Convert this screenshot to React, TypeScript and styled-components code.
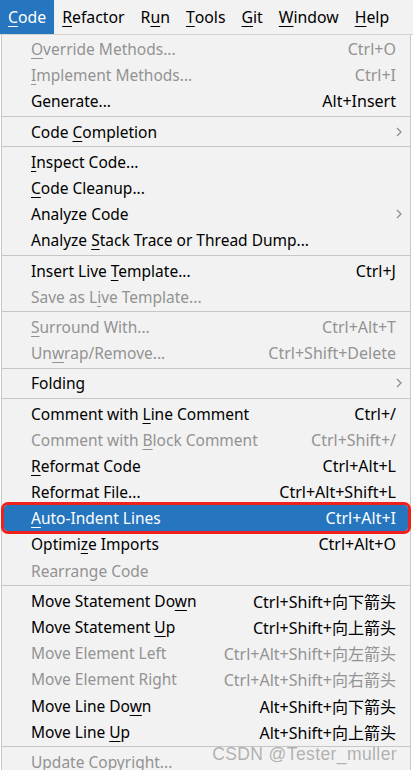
import React from "react";
import styled, { createGlobalStyle } from "styled-components";

const GlobalStyle = createGlobalStyle`
  body {
    margin: 0;
    background: #ffffff;
    font-family: "Noto Sans", "Noto Sans CJK SC", sans-serif;
  }
`;

const Page = styled.div`
  position: relative;
  width: 413px;
  height: 770px;
  overflow: hidden;
  background: #ffffff;
`;

const MenuBar = styled.div`
  display: flex;
  align-items: stretch;
  height: 35px;
  background: #f2f2f2;
  border-bottom: 1px solid #d4d4d4;
  box-sizing: border-box;
`;

const MenuTitle = styled.div<{ $active?: boolean }>`
  display: flex;
  align-items: center;
  padding: 0 8px;
  font-size: 15.8px;
  color: ${(p) => (p.$active ? "#ffffff" : "#000000")};
  background: ${(p) => (p.$active ? "#2675bf" : "transparent")};
`;

const Mn = styled.span`
  text-decoration: underline;
  text-underline-offset: 3px;
  text-decoration-thickness: 1px;
`;

const Dropdown = styled.div`
  margin-left: 1px;
  width: 410px;
  box-sizing: border-box;
  background: #f2f2f2;
  border-left: 1px solid #c9c9c9;
  border-right: 1px solid #c9c9c9;
  padding-top: 1px;
`;

const Item = styled.div<{ $disabled?: boolean; $active?: boolean }>`
  display: flex;
  align-items: center;
  justify-content: space-between;
  height: 26.2px;
  padding: 0 14px 0 29px;
  font-size: 15.5px;
  white-space: nowrap;
  color: ${(p) =>
    p.$active ? "#ffffff" : p.$disabled ? "#939393" : "#000000"};
  background: ${(p) => (p.$active ? "#2675bf" : "transparent")};
  ${(p) =>
    p.$active &&
    `
    margin: 0 2px;
    padding-left: 27px;
    padding-right: 12px;
    border-radius: 4px;
    outline: 3px solid #f0201c;
  `}
`;

const Shortcut = styled.span`
  font-size: 16px;
`;

const Separator = styled.div`
  height: 4px;
  display: flex;
  align-items: center;
  &::after {
    content: "";
    flex: 1;
    height: 1px;
    background: #c6c6c6;
  }
`;

const Chevron = () => (
  <svg width="6" height="10" viewBox="0 0 6 10" style={{ marginRight: -6 }}>
    <polyline
      points="1,1 5,5 1,9"
      fill="none"
      stroke="#8a8a8a"
      strokeWidth="1.2"
    />
  </svg>
);

// CSDN watermark sits on top of the menu, like in the screenshot
const Watermark = styled.div`
  position: absolute;
  right: 16px;
  bottom: 5px;
  font-family: "Liberation Sans", sans-serif;
  font-size: 17.5px;
  color: rgba(120, 120, 120, 0.55);
  letter-spacing: 0.4px;
`;

type Entry =
  | "sep"
  | {
      label: React.ReactNode;
      shortcut?: string;
      disabled?: boolean;
      active?: boolean;
      sub?: boolean;
    };

const u = (pre: string, m: string, post: string) => (
  <>
    {pre}
    <Mn>{m}</Mn>
    {post}
  </>
);

const entries: Entry[] = [
  { label: u("", "O", "verride Methods..."), shortcut: "Ctrl+O", disabled: true },
  { label: u("", "I", "mplement Methods..."), shortcut: "Ctrl+I", disabled: true },
  { label: "Generate...", shortcut: "Alt+Insert" },
  "sep",
  { label: u("Code ", "C", "ompletion"), sub: true },
  "sep",
  { label: u("", "I", "nspect Code...") },
  { label: u("", "C", "ode Cleanup...") },
  { label: "Analyze Code", sub: true },
  { label: u("Analyze ", "S", "tack Trace or Thread Dump...") },
  "sep",
  { label: u("Insert Live ", "T", "emplate..."), shortcut: "Ctrl+J" },
  { label: u("Save as L", "i", "ve Template..."), disabled: true },
  "sep",
  { label: u("", "S", "urround With..."), shortcut: "Ctrl+Alt+T", disabled: true },
  { label: u("Un", "w", "rap/Remove..."), shortcut: "Ctrl+Shift+Delete", disabled: true },
  "sep",
  { label: "Folding", sub: true },
  "sep",
  { label: u("Comment with ", "L", "ine Comment"), shortcut: "Ctrl+/" },
  { label: u("Comment with ", "B", "lock Comment"), shortcut: "Ctrl+Shift+/", disabled: true },
  { label: u("", "R", "eformat Code"), shortcut: "Ctrl+Alt+L" },
  { label: "Reformat File...", shortcut: "Ctrl+Alt+Shift+L" },
  { label: u("", "A", "uto-Indent Lines"), shortcut: "Ctrl+Alt+I", active: true },
  { label: u("Optimi", "z", "e Imports"), shortcut: "Ctrl+Alt+O" },
  { label: "Rearrange Code", disabled: true },
  "sep",
  { label: u("Move Statement Do", "w", "n"), shortcut: "Ctrl+Shift+向下箭头" },
  { label: u("Move Statement ", "U", "p"), shortcut: "Ctrl+Shift+向上箭头" },
  { label: "Move Element Left", shortcut: "Ctrl+Alt+Shift+向左箭头", disabled: true },
  { label: "Move Element Right", shortcut: "Ctrl+Alt+Shift+向右箭头", disabled: true },
  { label: u("Move Line Do", "w", "n"), shortcut: "Alt+Shift+向下箭头" },
  { label: u("Move Line ", "U", "p"), shortcut: "Alt+Shift+向上箭头" },
  "sep",
  { label: "Update Copyright...", disabled: true },
];

export default function App() {
  return (
    <Page>
      <GlobalStyle />
      <MenuBar>
        <MenuTitle $active>{u("", "C", "ode")}</MenuTitle>
        <MenuTitle>{u("", "R", "efactor")}</MenuTitle>
        <MenuTitle>{u("R", "u", "n")}</MenuTitle>
        <MenuTitle>{u("", "T", "ools")}</MenuTitle>
        <MenuTitle>{u("", "G", "it")}</MenuTitle>
        <MenuTitle>{u("", "W", "indow")}</MenuTitle>
        <MenuTitle>{u("", "H", "elp")}</MenuTitle>
      </MenuBar>
      <Dropdown>
        {entries.map((e, i) =>
          e === "sep" ? (
            <Separator key={i} />
          ) : (
            <Item key={i} $disabled={e.disabled} $active={e.active}>
              <span>{e.label}</span>
              {e.sub ? <Chevron /> : <Shortcut>{e.shortcut}</Shortcut>}
            </Item>
          )
        )}
      </Dropdown>
      <Watermark>CSDN @Tester_muller</Watermark>
    </Page>
  );
}
